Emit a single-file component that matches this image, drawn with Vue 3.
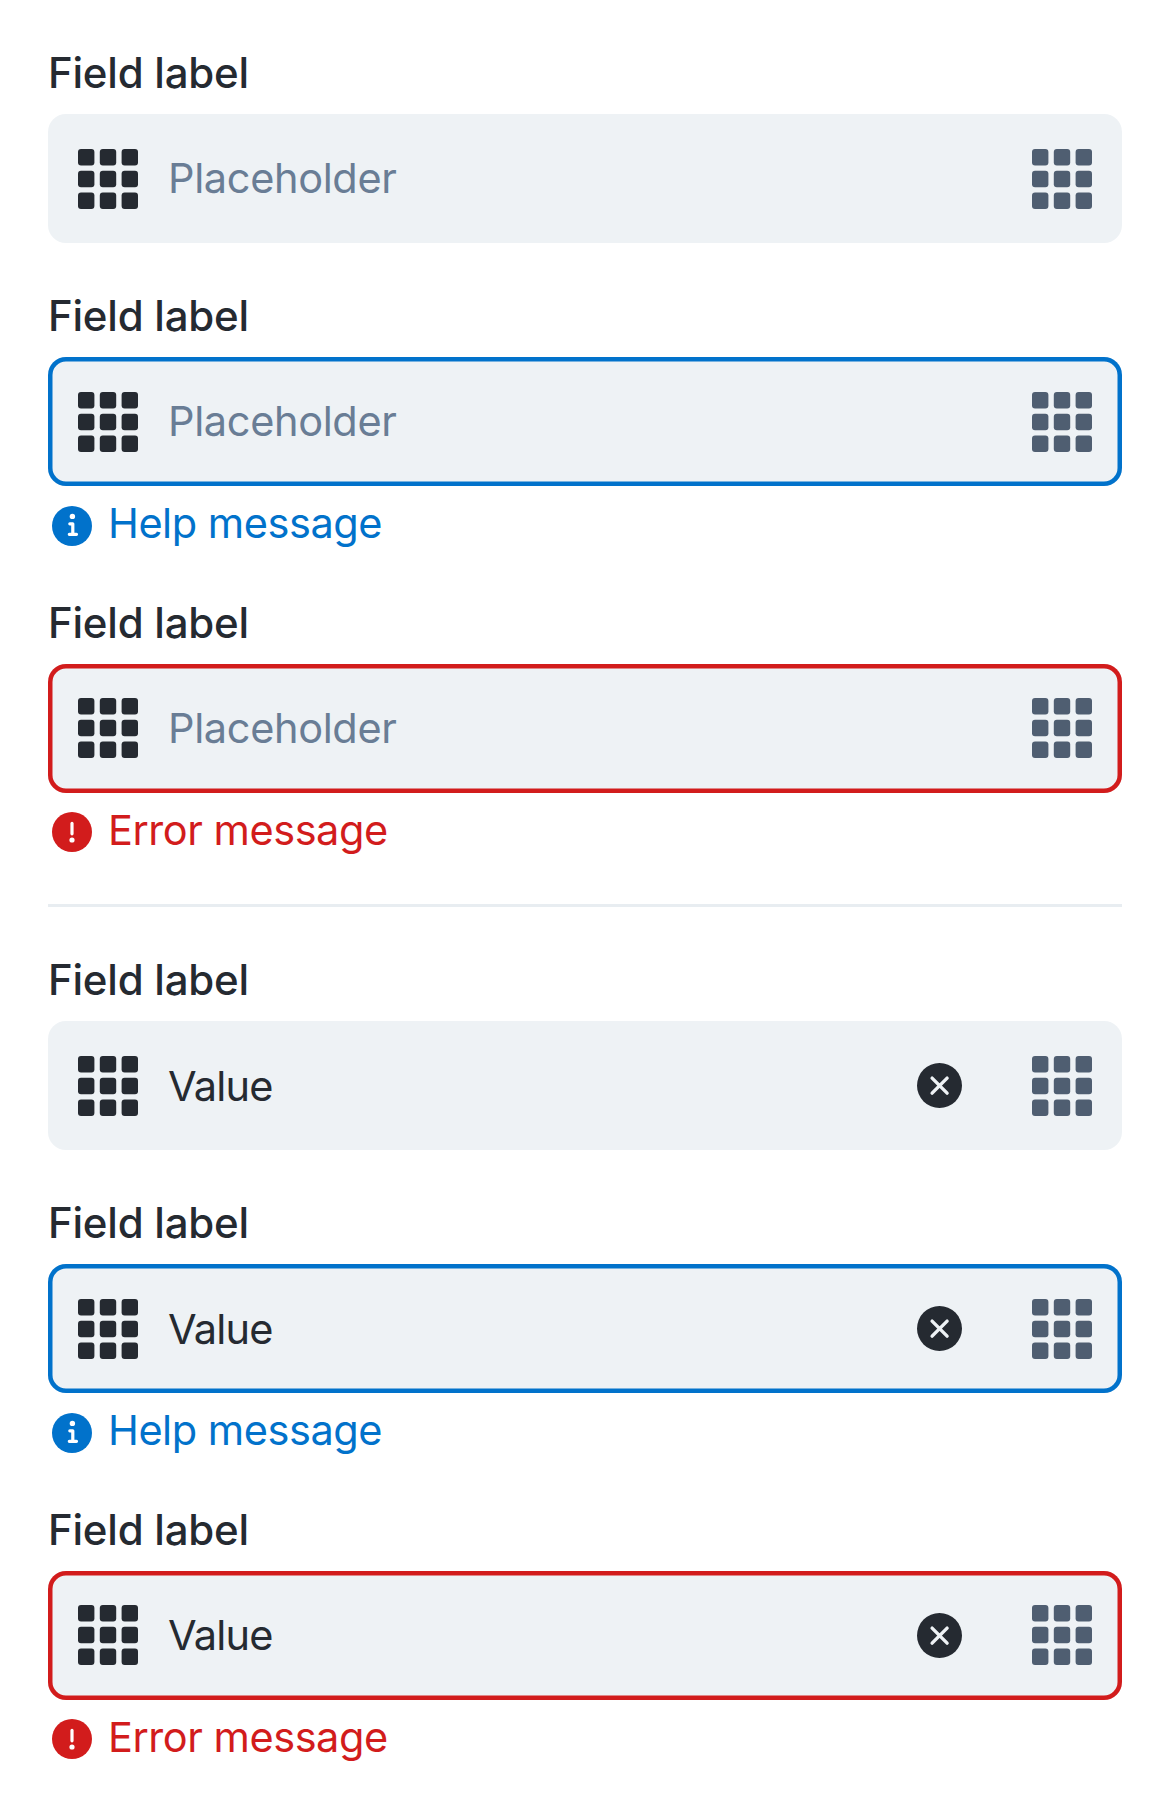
<script setup>
const groups = [
  { name: 'empty', text: 'Placeholder', filled: false },
  { name: 'valued', text: 'Value', filled: true },
]
const states = [
  { name: 'normal', message: '' },
  { name: 'help', message: 'Help message' },
  { name: 'error', message: 'Error message' },
]
const cells = [0, 21.8, 43.6]
</script>

<template>
  <main class="page">
    <section v-for="group in groups" :key="group.name" class="group" :class="group.name">
      <div v-for="state in states" :key="state.name" class="field" :class="state.name">
        <div class="label"><span>Field label</span></div>
        <div class="control">
          <svg class="grid" viewBox="0 0 60 60">
            <template v-for="y in cells" :key="y">
              <rect v-for="x in cells" :key="x" :x="x" :y="y" width="16.4" height="16.4" rx="3" />
            </template>
          </svg>
          <div class="text"><span>{{ group.text }}</span></div>
          <svg v-if="group.filled" class="clear" viewBox="0 0 45 45">
            <circle cx="22.5" cy="22.5" r="22.5" />
            <path d="M15.1 15.1l15 15M30.1 15.1l-15 15" />
          </svg>
          <svg class="grid suffix" viewBox="0 0 60 60">
            <template v-for="y in cells" :key="y">
              <rect v-for="x in cells" :key="x" :x="x" :y="y" width="16.4" height="16.4" rx="3" />
            </template>
          </svg>
        </div>
        <div v-if="state.message" class="message">
          <svg class="badge" viewBox="0 0 40 40">
            <circle cx="20" cy="20" r="20" fill="currentColor" />
            <template v-if="state.name === 'help'">
              <circle cx="20.4" cy="10.4" r="2.7" fill="#fff" />
              <path d="M17.8 17.8h3v10.5M17.3 28.3h7.2" />
            </template>
            <template v-else>
              <path d="M20 11.4v10.4" />
              <circle cx="20" cy="28" r="2.6" fill="#fff" />
            </template>
          </svg>
          <span>{{ state.message }}</span>
        </div>
      </div>
    </section>
  </main>
</template>

<style>
body {
  margin: 0;
  background: #fff;
}
</style>

<style scoped>
.page {
  box-sizing: border-box;
  width: 1170px;
  height: 1812px;
  padding: 46px 48px 0;
  overflow: hidden;
  font-family: Inter, "Liberation Sans", sans-serif;
  font-size: 42px;
  line-height: 54px;
  color: #252a31;
}
.group {
  display: flex;
  flex-direction: column;
  gap: 46px;
}
.group + .group {
  margin-top: 47px;
  padding-top: 46px;
  border-top: 3px solid #e8edf1;
}
.label {
  margin-bottom: 14px;
  font-weight: 500;
  letter-spacing: -0.24px;
}
.control {
  display: flex;
  align-items: flex-start;
  box-sizing: border-box;
  height: 129px;
  padding: 35px 30px 0;
  border-radius: 18px;
  background: #eef2f5;
}
.help .control {
  box-shadow: inset 0 0 0 4.5px #0172cb;
}
.error .control {
  padding-top: 34px;
  box-shadow: inset 0 0 0 4.5px #d21c1c;
}
.grid {
  flex: none;
  width: 60px;
  height: 60px;
  fill: #252a31;
}
.suffix {
  fill: #4f5e71;
}
.text {
  flex: 1;
  margin: 2px 0 0 30px;
  color: #697d95;
  font-size: 41.5px;
  letter-spacing: -0.36px;
}
.error .text {
  margin-top: 3px;
}
.valued .text {
  margin-top: 3px;
  color: #252a31;
  letter-spacing: -0.8px;
}
.clear {
  flex: none;
  width: 45px;
  height: 45px;
  margin: 7px 70px 0 0;
  fill: #252a31;
}
.error .clear {
  margin-top: 8px;
}
.clear path {
  stroke: #eef2f5;
  stroke-width: 3.4;
  stroke-linecap: round;
}
.message {
  display: flex;
  align-items: flex-start;
  padding: 10px 0 0 4px;
  font-size: 41.5px;
  letter-spacing: -0.46px;
}
.badge {
  flex: none;
  width: 40px;
  height: 40px;
  margin: 10px 16px 0 0;
}
.badge path {
  fill: none;
  stroke: #fff;
  stroke-width: 3.2;
  stroke-linecap: round;
  stroke-linejoin: round;
}
.error .badge {
  margin-top: 9px;
}
.help .message {
  color: #0172cb;
}
.error .message {
  color: #d21c1c;
}
</style>
